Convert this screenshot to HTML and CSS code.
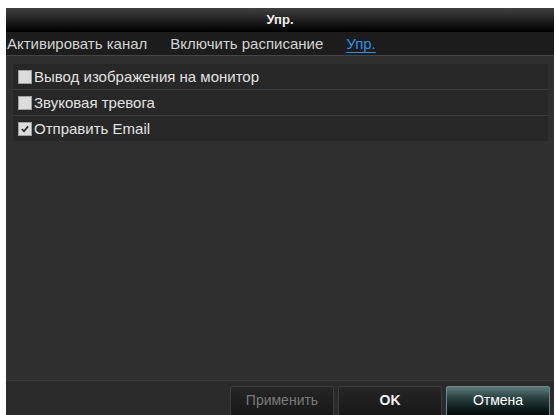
FILE: index.html
```html
<!DOCTYPE html>
<html lang="ru">
<head>
<meta charset="utf-8">
<title>Упр.</title>
<link rel="stylesheet" href="styles.css">
</head>
<body>
<div class="panel">
  <div class="titlebar">Упр.</div>
  <div class="tabs">
    <span class="tab">Активировать канал</span>
    <span class="tab">Включить расписание</span>
    <span class="tab active">Упр.</span>
  </div>
  <div class="content">
    <div class="list">
      <div class="row"><span class="check"></span><span class="label">Вывод изображения на монитор</span></div>
      <div class="row"><span class="check"></span><span class="label">Звуковая тревога</span></div>
      <div class="row"><span class="check checked"><svg viewBox="0 0 14 14" width="14" height="14"><path d="M3.2 7 L5.8 9.6 L10.6 4" fill="none" stroke="#2a2a2a" stroke-width="2"/></svg></span><span class="label">Отправить Email</span></div>
    </div>
  </div>
  <div class="footer">
    <button class="btn disabled">Применить</button>
    <button class="btn">OK</button>
    <button class="btn primary">Отмена</button>
  </div>
</div>
</body>
</html>
```

FILE: styles.css
```css
html, body {
  margin: 0;
  padding: 0;
  background: #ffffff;
}
body {
  font-family: "Liberation Sans", Arial, sans-serif;
  font-size: 15px;
}
.panel {
  margin: 8px 0 0 6px;
  width: 548px;
  height: 407px;
  display: flex;
  flex-direction: column;
  overflow: hidden;
  background: #2e2e2e;
}
.titlebar {
  height: 24px;
  flex: none;
  line-height: 23px;
  text-align: center;
  color: #f2f2f2;
  font-weight: bold;
  font-size: 13px;
  background: linear-gradient(#404040 0%, #2a2a2a 35%, #0c0c0c 80%, #000 100%);
}
.tabs {
  height: 23px;
  flex: none;
  display: flex;
  align-items: center;
  gap: 23px;
  padding-left: 1px;
  background: #1c1c1c;
}
.tab {
  color: #d4d4d4;
  font-size: 15px;
}
.tab.active {
  color: #2f8fe6;
  text-decoration: underline;
  text-underline-offset: 3px;
}
.content {
  flex: 1;
  border-top: 1px solid #454545;
  background: #2f2f2f;
  padding: 8px 6px 0 7px;
}
.list {
  border-radius: 3px;
  overflow: hidden;
  background: #282828;
}
.row {
  height: 25px;
  display: flex;
  align-items: center;
  padding-left: 5px;
  background: #272727;
  border-bottom: 1px solid #3c3c3c;
}
.row:last-child {
  border-bottom: none;
}
.check {
  width: 14px;
  height: 14px;
  box-sizing: border-box;
  background: #dcdcdc;
  border: 1px solid #a0a0a0;
  display: flex;
  align-items: center;
  justify-content: center;
  margin-right: 2px;
}
.check svg {
  display: block;
}
.label {
  color: #e2e2e2;
  font-size: 15px;
}
.footer {
  height: 35px;
  flex: none;
  border-top: 1px solid #3a3a3a;
  background: #2a2a2a;
  display: flex;
  justify-content: flex-end;
  align-items: flex-start;
  gap: 4px;
  padding: 5px 4px 0 0;
  box-sizing: border-box;
}
.btn {
  width: 104px;
  height: 31px;
  flex: none;
  font-family: "Liberation Sans", Arial, sans-serif;
  font-size: 14px;
  color: #f0f0f0;
  font-weight: bold;
  background: linear-gradient(#262626, #161616);
  border: 1px solid #3c3c3c;
  border-radius: 2px;
  padding: 0 0 3px 0;
}
.btn.disabled {
  color: #7a7a7a;
  font-weight: normal;
}
.btn.primary {
  font-weight: normal;
  color: #ffffff;
  border-color: #6c8a8a;
  background: linear-gradient(#5d7a7a 0%, #2c4444 35%, #0e1a1a 75%, #050808 100%);
}
```
